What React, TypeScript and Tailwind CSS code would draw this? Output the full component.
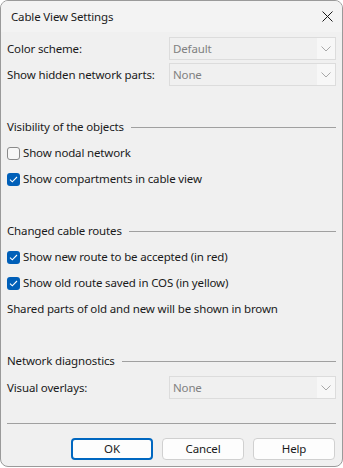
import React from "react";

const font = { fontFamily: '"Noto Sans", "Segoe UI", sans-serif', letterSpacing: "-0.15px" };

function Chevron() {
  return (
    <svg width="10" height="6" viewBox="0 0 10 6" fill="none">
      <path d="M0.5 0.5 L5 5 L9.5 0.5" stroke="#a8a8a8" strokeWidth="1" />
    </svg>
  );
}

function Combo({ value }: { value: string }) {
  return (
    <div className="flex h-[23px] w-[167px] border border-[#dcdcdc] bg-[#f0f0f0]">
      <div className="flex flex-1 items-center pl-[3px] text-[#808080]">{value}</div>
      <div className="flex w-[18px] items-center justify-center bg-[#f7f7f7]">
        <Chevron />
      </div>
    </div>
  );
}

function Check({ checked, label }: { checked: boolean; label: string }) {
  return (
    <div className="flex h-[26px] items-center">
      {checked ? (
        <div className="flex h-[13px] w-[13px] items-center justify-center rounded-[3px] bg-[#005fb8]">
          <svg width="9" height="7" viewBox="0 0 9 7" fill="none">
            <path d="M1 3.6 L3.3 5.8 L8 1" stroke="white" strokeWidth="1.1" />
          </svg>
        </div>
      ) : (
        <div className="h-[13px] w-[13px] rounded-[3px] border border-[#8a8a8a] bg-[#f7f7f7]" />
      )}
      <span className="ml-[3px]">{label}</span>
    </div>
  );
}

function Header({ label }: { label: string }) {
  return (
    <div className="flex h-[26px] items-center">
      <span>{label}</span>
      <div className="ml-[7px] h-px flex-1 bg-[#a0a0a0]" />
    </div>
  );
}

function Btn({ label, primary }: { label: string; primary?: boolean }) {
  return (
    <div
      className={
        "flex h-[22px] w-[82px] items-center justify-center rounded-[4px] bg-[#fdfdfd] " +
        (primary ? "border-2 border-[#0067c0]" : "border border-[#d0d0d0]")
      }
    >
      {label}
    </div>
  );
}

export default function App() {
  return (
    <div className="h-[468px] w-[343px] bg-white text-[11.5px] text-[#1a1a1a]" style={font}>
      <div className="flex h-[467px] w-[343px] flex-col overflow-hidden rounded-[8px] border border-[#9a9a9a] bg-[#f0f0f0]">
        <div className="flex h-[31px] shrink-0 items-center justify-between bg-[#f3f3f3] pl-[10px] pr-[9px]">
          <span>Cable View Settings</span>
          <svg width="11" height="11" viewBox="0 0 11 11" fill="none">
            <path d="M0.5 0.5 L10.5 10.5 M10.5 0.5 L0.5 10.5" stroke="#1a1a1a" strokeWidth="1" />
          </svg>
        </div>
        <div className="flex flex-col px-[6px]">
          <div className="mt-[5px] flex h-[23px] items-center justify-between">
            <span>Color scheme:</span>
            <Combo value="Default" />
          </div>
          <div className="mt-[3px] flex h-[23px] items-center justify-between">
            <span>Show hidden network parts:</span>
            <Combo value="None" />
          </div>
          <div className="mt-[28px]">
            <Header label="Visibility of the objects" />
          </div>
          <Check checked={false} label="Show nodal network" />
          <Check checked label="Show compartments in cable view" />
          <div className="mt-[26px]">
            <Header label="Changed cable routes" />
          </div>
          <Check checked label="Show new route to be accepted (in red)" />
          <Check checked label="Show old route saved in COS (in yellow)" />
          <div className="flex h-[26px] items-center">Shared parts of old and new will be shown in brown</div>
          <div className="mt-[26px]">
            <Header label="Network diagnostics" />
          </div>
          <div className="mt-[2px] flex h-[23px] items-center justify-between">
            <span>Visual overlays:</span>
            <Combo value="None" />
          </div>
          <div className="mt-[24px] h-px bg-[#a0a0a0]" />
          <div className="mt-[14px] flex justify-end gap-[9px] pr-[1px]">
            <Btn label="OK" primary />
            <Btn label="Cancel" />
            <Btn label="Help" />
          </div>
        </div>
      </div>
    </div>
  );
}
